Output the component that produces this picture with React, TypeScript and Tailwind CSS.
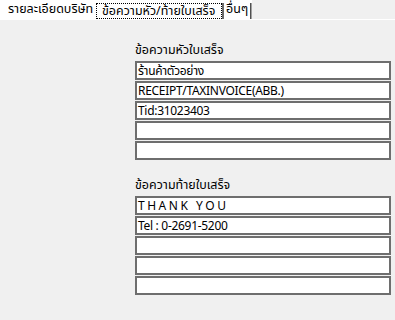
const thai = "font-['Tahoma','Noto_Sans_Thai','Loma','Garuda','Norasi','Noto_Sans',sans-serif]";

const headerLines = ['ร้านค้าตัวอย่าง', 'RECEIPT/TAXINVOICE(ABB.)', 'Tid:31023403', '', ''];
const footerLines = ['T H A N K   Y O U', 'Tel : 0-2691-5200', '', '', ''];

function LineBox({ value }: { value: string }) {
  return (
    <div className="h-[19px] w-[256px] bg-white border-2 border-[#6e6e6e] flex items-center pl-[1px] overflow-hidden">
      <span className={`${thai} text-[12px] tracking-[-0.3px] text-black whitespace-pre leading-none`}>{value}</span>
    </div>
  );
}

function Section({ title, lines, className }: { title: string; lines: string[]; className?: string }) {
  return (
    <div className={`flex flex-col pl-[135px] ${className ?? ''}`}>
      <div className={`${thai} h-4 text-[12.5px] leading-4 text-black whitespace-nowrap`}>{title}</div>
      <div className="flex flex-col gap-px mt-[2px]">
        {lines.map((l, i) => (
          <LineBox key={i} value={l} />
        ))}
      </div>
    </div>
  );
}

export default function App() {
  return (
    <div className="w-[395px] h-[320px] bg-[#f0f0f0] overflow-hidden flex flex-col">
      {/* tab strip */}
      <div className="h-[20px] flex border-b border-white">
        <div className="flex bg-white h-[19px]">
          <div className={`${thai} w-[96px] pl-2 text-[12.5px] leading-[20px] text-black whitespace-nowrap`}>รายละเอียดบริษัท</div>
          <div className="w-[126px] pt-[3px]">
            <div className={`${thai} h-[16px] border border-dotted border-black pl-[5px] text-[12.5px] leading-[15px] text-black whitespace-nowrap`}>
              ข้อความหัว/ท้ายใบเสร็จ
            </div>
          </div>
          <div className="w-[2px] mt-[3px] bg-[#6a6a6a]" />
          <div className={`${thai} w-[26px] pl-[2px] text-[12.5px] leading-[20px] text-black whitespace-nowrap`}>อื่นๆ</div>
          <div className="w-[1px] mt-[3px] bg-[#505050]" />
          <div className="w-[1px] mt-[3px] bg-[#a0a0a0]" />
        </div>
      </div>
      <Section title="ข้อความหัวใบเสร็จ" lines={headerLines} className="pt-[23px]" />
      <Section title="ข้อความท้ายใบเสร็จ" lines={footerLines} className="pt-[18px]" />
    </div>
  );
}
